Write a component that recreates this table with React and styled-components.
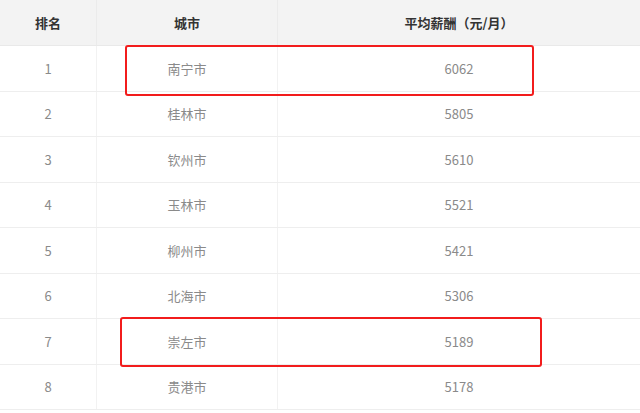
import React from "react";
import styled, { createGlobalStyle } from "styled-components";

const Global = createGlobalStyle`
  html, body { margin: 0; padding: 0; background: #fff; }
  body { font-family: "Noto Sans CJK SC", "Noto Sans", sans-serif; }
`;

const Page = styled.div`
  position: relative;
  width: 640px;
  height: 413px;
  overflow: hidden;
  background: #fff;
`;

const Table = styled.div`
  display: flex;
  flex-direction: column;
`;

const Row = styled.div`
  display: grid;
  grid-template-columns: 97px 181px 1fr;
  height: ${(p) => (p.$head ? "46px" : "45.5px")};
  box-sizing: border-box;
  border-bottom: 1px solid ${(p) => (p.$head ? "#e9e9e9" : "#eeeeee")};
  background: ${(p) => (p.$head ? "#f3f3f3" : "#fff")};
`;

const Cell = styled.div`
  display: flex;
  align-items: center;
  justify-content: center;
  box-sizing: border-box;
  border-right: ${(p) => (p.$last ? "none" : `1px solid ${p.$head ? "#ebebeb" : "#f2f2f2"}`)};
  font-size: 13px;
  font-weight: ${(p) => (p.$head ? 700 : 400)};
  color: ${(p) => (p.$head ? "#333" : "#8a8a8a")};
  padding-right: ${(p) => (p.$pad ? p.$pad : "0px")};
`;

const Mark = styled.div`
  position: absolute;
  box-sizing: border-box;
  border: 2px solid #f21c1c;
  border-radius: 3px;
`;

const data = [
  ["1", "南宁市", "6062"],
  ["2", "桂林市", "5805"],
  ["3", "钦州市", "5610"],
  ["4", "玉林市", "5521"],
  ["5", "柳州市", "5421"],
  ["6", "北海市", "5306"],
  ["7", "崇左市", "5189"],
  ["8", "贵港市", "5178"],
];

export default function App() {
  return (
    <Page>
      <Global />
      <Table>
        <Row $head>
          <Cell $head>排名</Cell>
          <Cell $head>城市</Cell>
          <Cell $head $last>平均薪酬（元/月）</Cell>
        </Row>
        {data.map(([r, c, s]) => (
          <Row key={r}>
            <Cell>{r}</Cell>
            <Cell>{c}</Cell>
            <Cell $last>{s}</Cell>
          </Row>
        ))}
      </Table>
      <Mark style={{ left: 125, top: 45, width: 409, height: 51 }} />
      <Mark style={{ left: 120, top: 317, width: 422, height: 50 }} />
    </Page>
  );
}
